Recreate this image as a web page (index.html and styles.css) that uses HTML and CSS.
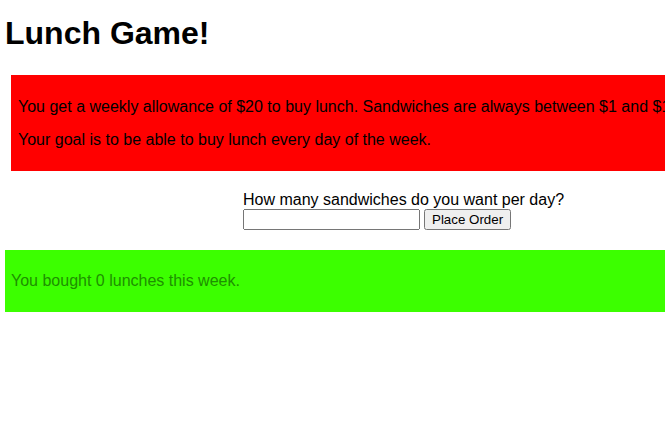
FILE: index.html
```html
<!DOCTYPE html>
<html>
<head>
<meta charset="utf-8">
<link rel="stylesheet" href="styles.css">
</head>
<body>
<h1 class="title">Lunch Game!</h1>
<div class="rules">
  <p>You get a weekly allowance of $20 to buy lunch. Sandwiches are always between $1 and $10.</p>
  <p>Your goal is to be able to buy lunch every day of the week.</p>
</div>
<form class="order">
  <label class="order-label" for="qty">How many sandwiches do you want per day?</label>
  <div class="order-row">
    <input id="qty" class="order-input" type="text">
    <button type="button" class="order-btn">Place Order</button>
  </div>
</form>
<div class="result">
  <p>You bought 0 lunches this week.</p>
</div>
</body>
</html>
```
FILE: styles.css
```css
html { overflow-x: hidden; }
body {
  margin: 0;
  padding: 0 5px;
  font-family: "Liberation Sans", Arial, sans-serif;
  font-size: 16px;
  color: #000;
  background: #fff;
}
.title {
  font-size: 32px;
  font-weight: bold;
  margin: 15px 0 23px 0;
  line-height: normal;
}
.rules {
  background: #ff0000;
  margin-left: 6px;
  padding: 8px 7px 7px;
  width: 800px;
  white-space: nowrap;
}
.rules p {
  margin: 15px 0;
}
.order {
  margin: 20px 0 20px 238px;
}
.order-label {
  display: block;
}
.order-row {
  display: flex;
  align-items: center;
  gap: 4px;
}
.order-input {
  width: 177px;
  height: 21px;
  box-sizing: border-box;
  margin: 0;
  font-family: Arial, sans-serif;
  font-size: 13px;
}
.order-btn {
  margin: 0;
  font-family: Arial, sans-serif;
  font-size: 13.33px;
  height: 21px;
  padding: 1px 6px;
}
.result {
  background: #3cff00;
  width: 800px;
  padding: 6px 6px;
  color: #1e9000;
}
.result p {
  margin: 16px 0;
}
```
